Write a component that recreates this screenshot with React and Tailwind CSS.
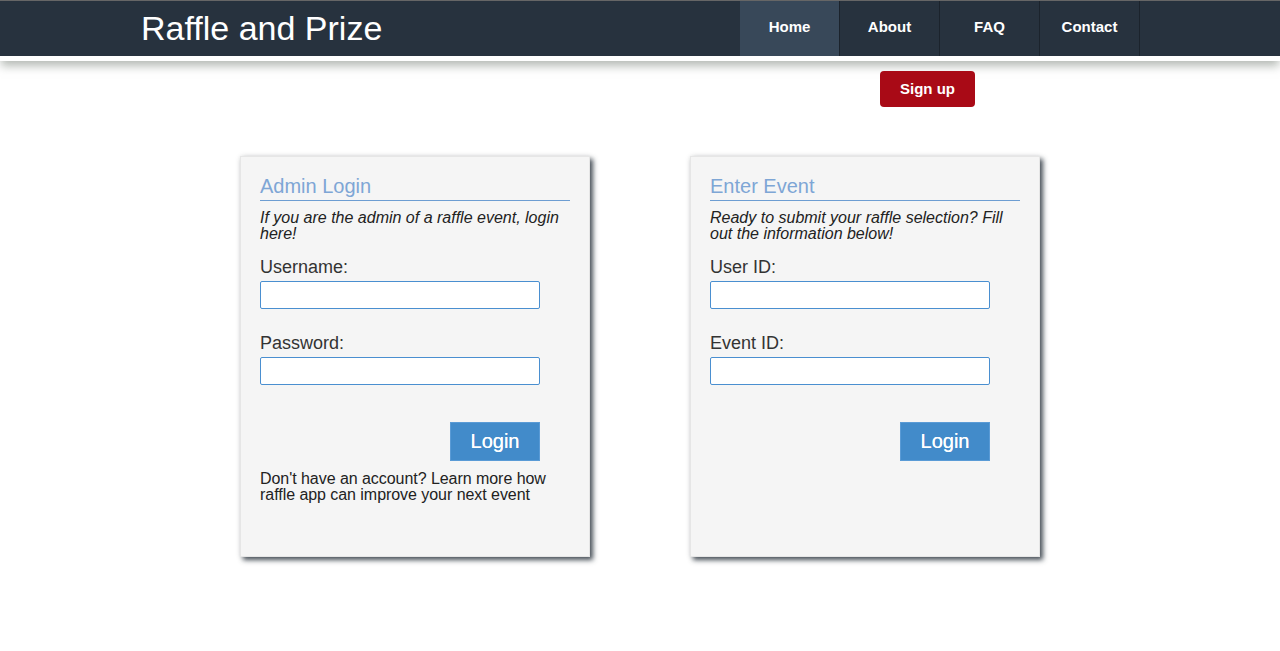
import React from "react";

const font = { fontFamily: '"Liberation Sans", Arial, Helvetica, sans-serif' };

function Field({ label, first }) {
  return (
    <div className={first ? "mt-[15px]" : "mt-[24px]"}>
      <div className="text-[18px] leading-[20px] text-[#333]">{label}</div>
      <input
        type="text"
        className="mt-[4px] block w-[280px] h-[28px] bg-white border border-[#4a8fd0] rounded-[2px] outline-none"
      />
    </div>
  );
}

function Card({ title, intro, fields, footer }) {
  return (
    <div className="w-[350px] h-[401px] bg-[#f5f5f5] border border-[#e6e6e6] shadow-[3px_3px_5px_rgba(40,50,60,0.85),0_0_6px_rgba(0,0,0,0.08)] px-[19px] pt-[18px]">
      <div className="text-[20px] leading-[22px] text-[#7ea6d5] pb-[3px] border-b border-[#6d9dd2]">
        {title}
      </div>
      <div className="mt-[9px] italic text-[16px] leading-[16px] text-[#222]">{intro}</div>
      <Field label={fields[0]} first />
      <Field label={fields[1]} />
      <div className="w-[280px] flex justify-end mt-[37px]">
        <button className="w-[90px] h-[39px] bg-[#428bca] border border-[#5a9bd6] text-white text-[20px] leading-none pb-[2px] [text-shadow:0_0_0.4px_white]">
          Login
        </button>
      </div>
      {footer && (
        <div className="mt-[10px] text-[16px] leading-[16px] text-[#222] w-[300px] tracking-[-0.05px]">{footer}</div>
      )}
    </div>
  );
}

export default function App() {
  return (
    <div className="min-h-[651px] bg-white" style={font}>
      <header className="border-t border-[#666] bg-[#27323e] border-b-[5px] border-b-white shadow-[0_6px_9px_-1px_rgba(120,130,120,0.55)]">
        <div className="h-[55px] flex items-stretch">
          <div className="pl-[141px] flex items-center text-white text-[34px] leading-none flex-1 pb-[2px]">
            Raffle and Prize
          </div>
          <nav className="flex mr-[140px]">
            {["Home", "About", "FAQ", "Contact"].map((n, i) => (
              <div
                key={n}
                className={
                  "w-[100px] flex items-center justify-center text-white text-[15px] font-bold pb-[2px] border-r border-[#1b232c] " +
                  (i === 0 ? "bg-[#384859]" : "")
                }
              >
                {n}
              </div>
            ))}
          </nav>
        </div>
      </header>
      <div className="flex pl-[880px] mt-[10px]">
        <button className="w-[95px] h-[36px] rounded-[4px] bg-[#a90a16] text-white text-[15px] font-bold">
          Sign up
        </button>
      </div>
      <div className="flex gap-[100px] pl-[240px] mt-[49px]">
        <Card
          title="Admin Login"
          intro="If you are the admin of a raffle event, login here!"
          fields={["Username:", "Password:"]}
          footer="Don't have an account? Learn more how raffle app can improve your next event"
        />
        <Card
          title="Enter Event"
          intro="Ready to submit your raffle selection? Fill out the information below!"
          fields={["User ID:", "Event ID:"]}
        />
      </div>
    </div>
  );
}
